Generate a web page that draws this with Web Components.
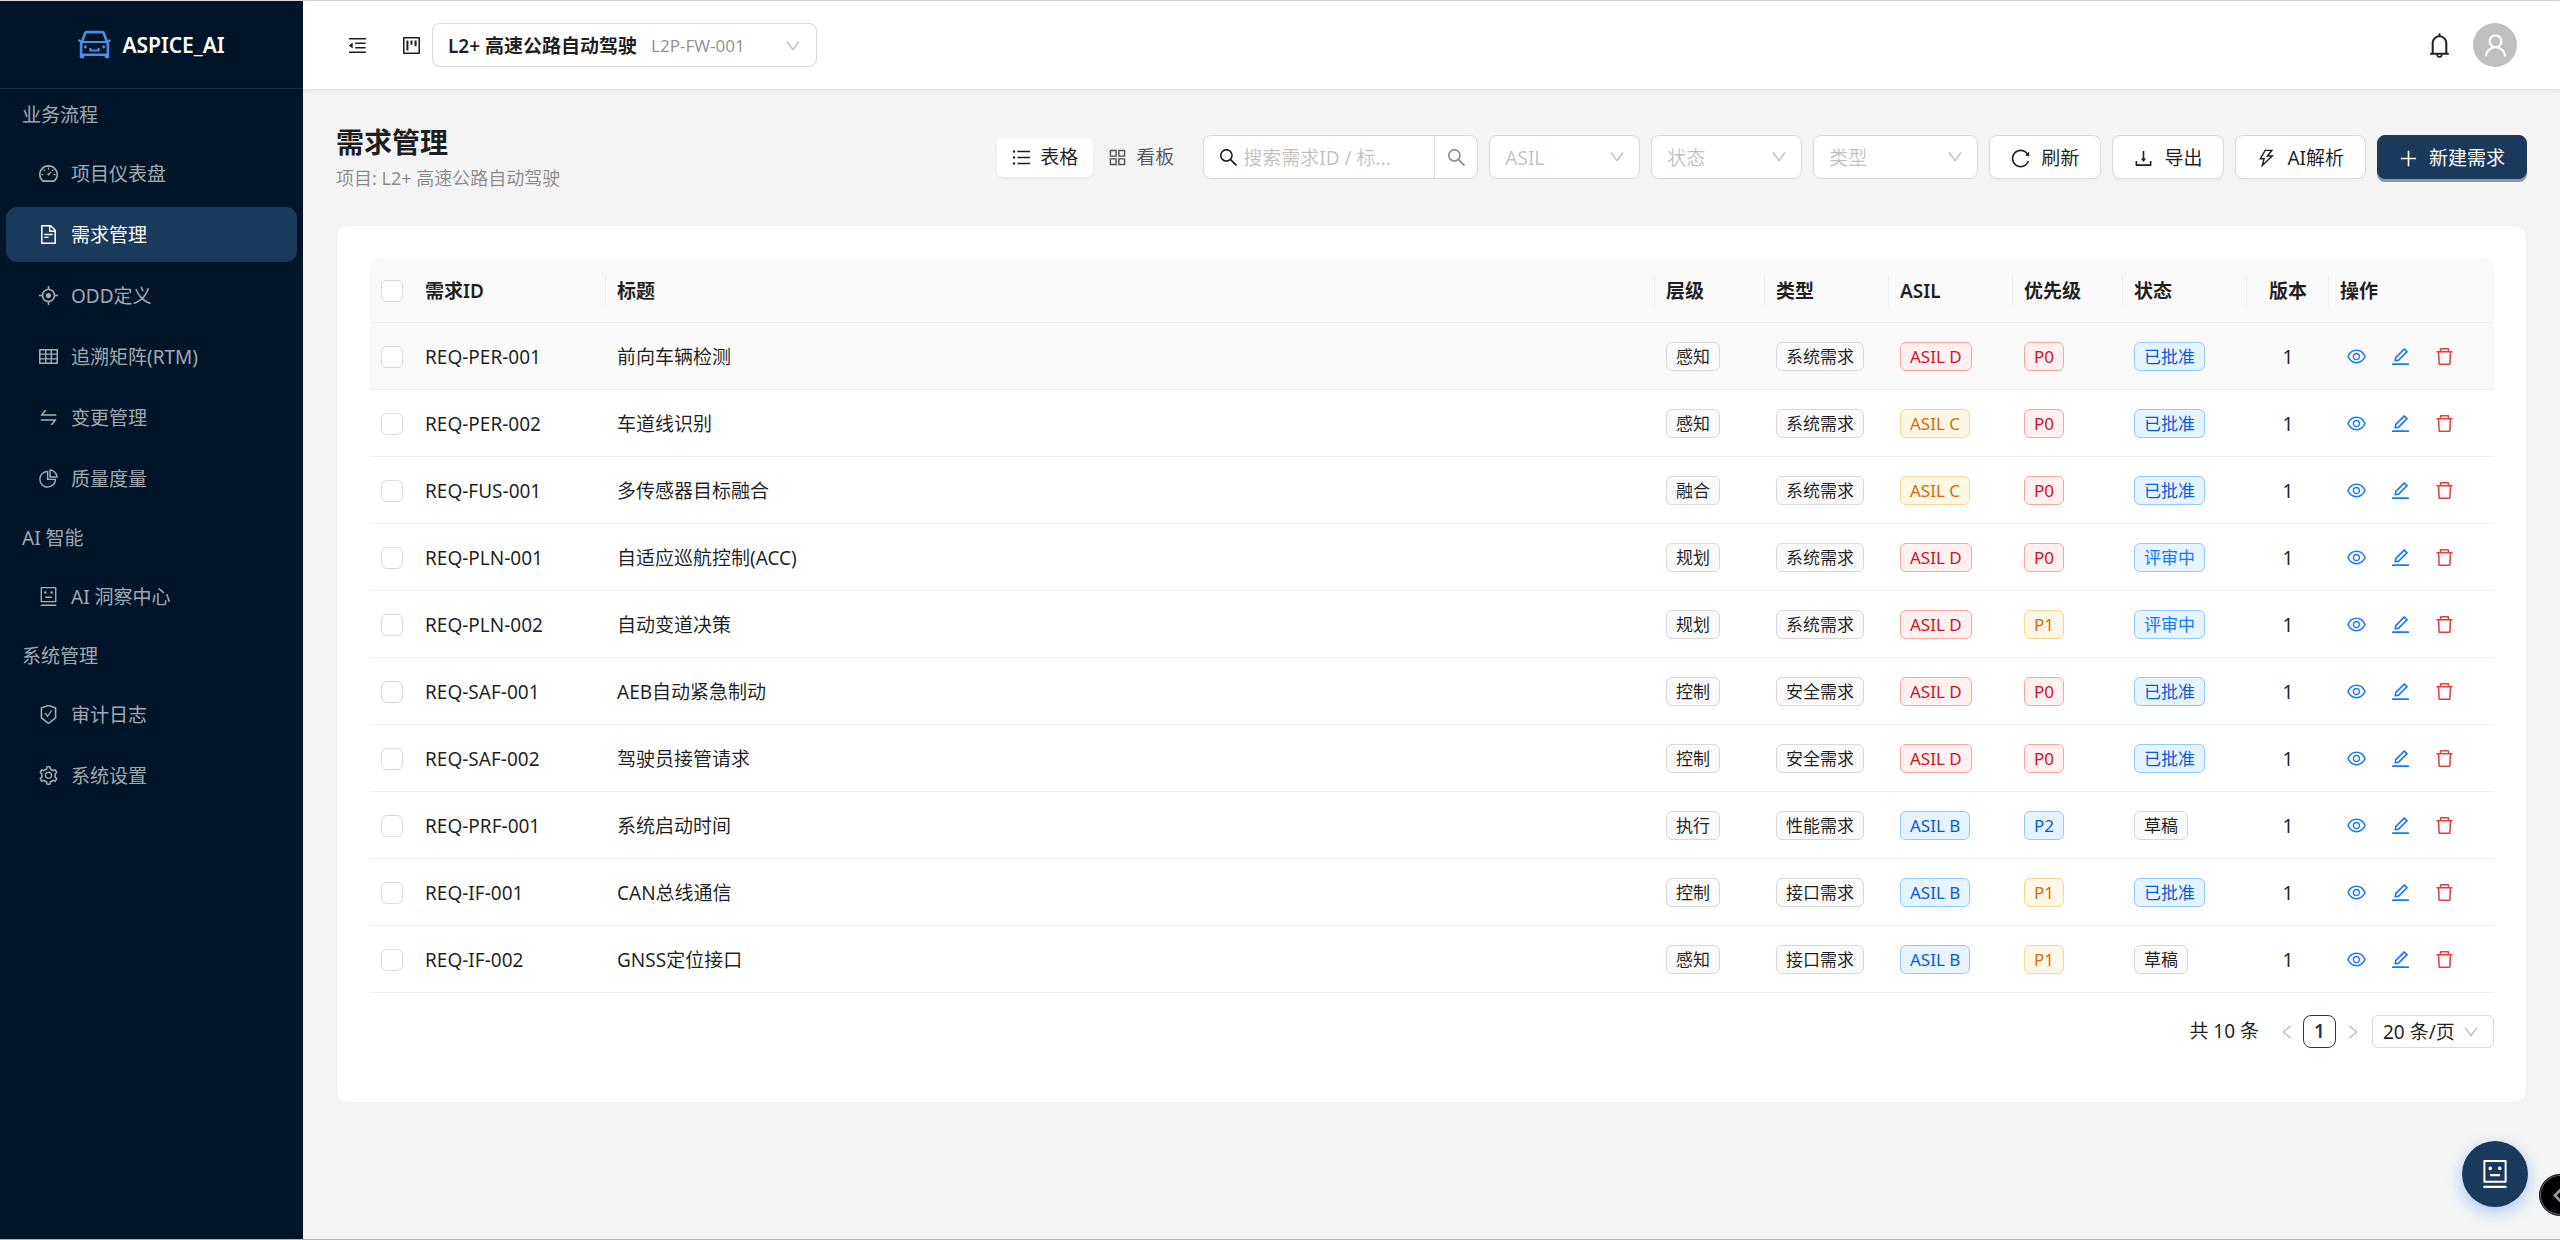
<!DOCTYPE html>
<html lang="zh-CN">
<head>
<meta charset="utf-8">
<meta name="viewport" content="width=device-width, initial-scale=1">
<title>需求管理 - ASPICE_AI</title>
<style>
  :root {
    --primary: #1a3a5c;
    --link: #1677ff;
    --danger: #e53e3e;
    --border: #d9d9d9;
    --split: #f0f0f0;
    --text: rgba(0, 0, 0, 0.88);
    --text-sub: rgba(0, 0, 0, 0.45);
    --text-hint: rgba(0, 0, 0, 0.25);
  }

  body {
    margin: 0;
    background: #f4f4f4;
    color: var(--text);
    font-family: "Noto Sans", "Noto Sans CJK SC", sans-serif;
    font-size: 19px;
    line-height: 30px;
  }
</style>
</head>
<body>
<app-shell>
  <side-nav slot="nav">
    <nav-group label="业务流程">
      <nav-item icon="dashboard">项目仪表盘</nav-item>
      <nav-item icon="file" active>需求管理</nav-item>
      <nav-item icon="aim">ODD定义</nav-item>
      <nav-item icon="table">追溯矩阵(RTM)</nav-item>
      <nav-item icon="swap">变更管理</nav-item>
      <nav-item icon="pie">质量度量</nav-item>
    </nav-group>
    <nav-group label="AI 智能">
      <nav-item icon="robot">AI 洞察中心</nav-item>
    </nav-group>
    <nav-group label="系统管理">
      <nav-item icon="safety">审计日志</nav-item>
      <nav-item icon="setting">系统设置</nav-item>
    </nav-group>
  </side-nav>

  <app-header slot="header"></app-header>

  <page-heading heading="需求管理" sub="项目: L2+ 高速公路自动驾驶">
    <view-switch></view-switch>
    <search-box></search-box>
    <filter-select label="ASIL" options="ASIL A,ASIL B,ASIL C,ASIL D"></filter-select>
    <filter-select label="状态" options="草稿,评审中,已批准"></filter-select>
    <filter-select label="类型" options="系统需求,安全需求,性能需求,接口需求" wide></filter-select>
    <ui-button icon="reload">刷新</ui-button>
    <ui-button icon="download">导出</ui-button>
    <ui-button icon="thunder">AI解析</ui-button>
    <ui-button icon="plus" primary>新建需求</ui-button>
  </page-heading>

  <data-card>
    <req-table></req-table>
    <page-nav slot="footer" total="10"></page-nav>
  </data-card>
</app-shell>
<float-tools></float-tools>

<script>
const ICONS = {
  car: 'M380 704h264c4.4 0 8-3.6 8-8v-84c0-4.4-3.6-8-8-8h-40c-4.4 0-8 3.6-8 8v36H428v-36c0-4.4-3.6-8-8-8h-40c-4.4 0-8 3.6-8 8v84c0 4.4 3.6 8 8 8zm340-123a40 40 0 1080 0 40 40 0 10-80 0zm239-167.6L935.3 372a8 8 0 00-10.9-2.9l-50.7 29.6-78.3-216.2a63.9 63.9 0 00-60.9-44.4H301.2c-34.7 0-65.5 22.4-76.2 55.5l-74.6 205.2-50.8-29.6a8 8 0 00-10.9 2.9L65 413.4c-2.2 3.8-.9 8.6 2.9 10.8l60.4 35.2-14.5 40c-1.2 3.2-1.8 6.6-1.8 10v348.2c0 15.7 11.8 28.4 26.3 28.4h67.6c12.3 0 23-9.3 25.6-22.3l7.7-37.7h545.6l7.7 37.7c2.7 13 13.3 22.3 25.6 22.3h67.6c14.5 0 26.3-12.7 26.3-28.4V509.4c0-3.4-.6-6.8-1.8-10l-14.5-40 60.3-35.2a8 8 0 003-10.8zM840 517v237H184V517l15.6-43h624.8l15.6 43zM292.7 218.1l.5-1.3.4-1.3c1.1-3.3 4.1-5.5 7.6-5.5h427.6l75.4 208H220l72.7-199.9zM224 581a40 40 0 1080 0 40 40 0 10-80 0z',
  fold: 'M408 442h480c4.4 0 8-3.6 8-8v-56c0-4.4-3.6-8-8-8H408c-4.4 0-8 3.6-8 8v56c0 4.4 3.6 8 8 8zm-8 204c0 4.4 3.6 8 8 8h480c4.4 0 8-3.6 8-8v-56c0-4.4-3.6-8-8-8H408c-4.4 0-8 3.6-8 8v56zm504-486H120c-4.4 0-8 3.6-8 8v56c0 4.4 3.6 8 8 8h784c4.4 0 8-3.6 8-8v-56c0-4.4-3.6-8-8-8zm0 632H120c-4.4 0-8 3.6-8 8v56c0 4.4 3.6 8 8 8h784c4.4 0 8-3.6 8-8v-56c0-4.4-3.6-8-8-8zM115.4 518.9L271.7 642c5.8 4.6 14.4.5 14.4-6.9V388.9c0-7.4-8.5-11.5-14.4-6.9L115.4 505.1a8.74 8.74 0 000 13.8z',
  project: 'M280 752h80c4.4 0 8-3.6 8-8V280c0-4.4-3.6-8-8-8h-80c-4.4 0-8 3.6-8 8v464c0 4.4 3.6 8 8 8zm192-280h80c4.4 0 8-3.6 8-8V280c0-4.4-3.6-8-8-8h-80c-4.4 0-8 3.6-8 8v184c0 4.4 3.6 8 8 8zm192 72h80c4.4 0 8-3.6 8-8V280c0-4.4-3.6-8-8-8h-80c-4.4 0-8 3.6-8 8v256c0 4.4 3.6 8 8 8zm216-432H144c-17.7 0-32 14.3-32 32v736c0 17.7 14.3 32 32 32h736c17.7 0 32-14.3 32-32V144c0-17.7-14.3-32-32-32zm-40 728H184V184h656v656z',
  down: 'M884 256h-75c-5.1 0-9.9 2.5-12.9 6.6L512 654.2 227.9 262.6c-3-4.1-7.8-6.6-12.9-6.6h-75c-6.5 0-10.3 7.4-6.5 12.7l352.6 486.1c12.8 17.6 39 17.6 51.7 0l352.6-486.1c3.9-5.3.1-12.7-6.4-12.7z',
  left: 'M724 218.3V141c0-6.7-7.7-10.4-12.9-6.3L260.3 486.8a31.86 31.86 0 000 50.3l450.8 352.1c5.3 4.1 12.9.4 12.9-6.3v-77.3c0-4.9-2.3-9.6-6.1-12.6l-360-281 360-281.1c3.8-3 6.1-7.7 6.1-12.6z',
  right: 'M765.7 486.8L314.9 134.7A7.97 7.97 0 00302 141v77.3c0 4.9 2.3 9.6 6.1 12.6l360 281.1-360 281.1c-3.9 3-6.1 7.7-6.1 12.6V883c0 6.7 7.7 10.4 12.9 6.3l450.8-352.1a31.96 31.96 0 000-50.4z',
  chevron: 'M560 120L168 512L560 904L660 804L368 512L660 220z',
  search: 'M909.6 854.5L649.9 594.8C690.2 542.7 712 479 712 412c0-80.2-31.3-155.4-87.9-212.1-56.6-56.7-132-87.9-212.1-87.9s-155.5 31.3-212.1 87.9C143.2 256.5 112 331.8 112 412c0 80.1 31.3 155.5 87.9 212.1C256.5 680.8 331.8 712 412 712c67 0 130.6-21.8 182.7-62l259.7 259.6a8.2 8.2 0 0011.6 0l43.6-43.5a8.2 8.2 0 000-11.6zM570.4 570.4C528 612.7 471.8 636 412 636s-116-23.3-158.4-65.6C211.3 528 188 471.8 188 412s23.3-116.1 65.6-158.4C296 211.3 352.2 188 412 188s116.1 23.2 158.4 65.6S636 352.2 636 412s-23.3 116.1-65.6 158.4z',
  file: 'M854.6 288.6L639.4 73.4c-6-6-14.1-9.4-22.6-9.4H192c-17.7 0-32 14.3-32 32v832c0 17.7 14.3 32 32 32h640c17.7 0 32-14.3 32-32V311.3c0-8.5-3.4-16.7-9.4-22.7zM790.2 326H602V137.8L790.2 326zm1.8 562H232V136h302v216a42 42 0 0042 42h216v494zM504 618H320c-4.4 0-8 3.6-8 8v48c0 4.4 3.6 8 8 8h184c4.4 0 8-3.6 8-8v-48c0-4.4-3.6-8-8-8zM312 490v48c0 4.4 3.6 8 8 8h384c4.4 0 8-3.6 8-8v-48c0-4.4-3.6-8-8-8H320c-4.4 0-8 3.6-8 8z',
  dashboard: 'M924.8 385.6a446.7 446.7 0 00-96-142.4 446.7 446.7 0 00-142.4-96C631.1 123.8 572.5 112 512 112s-119.1 11.8-174.4 35.2a446.7 446.7 0 00-142.4 96 446.7 446.7 0 00-96 142.4C75.8 440.9 64 499.5 64 560c0 132.7 58.3 257.7 159.9 343.1l1.7 1.4c5.8 4.8 13.1 7.5 20.6 7.5h531.7c7.5 0 14.8-2.7 20.6-7.5l1.7-1.4C901.7 817.7 960 692.7 960 560c0-60.5-11.9-119.1-35.2-174.4zM761.4 836H262.6A371.12 371.12 0 01140 560c0-99.4 38.7-192.8 109-263 70.3-70.3 163.7-109 263-109 99.4 0 192.8 38.7 263 109 70.3 70.3 109 163.7 109 263 0 105.6-44.5 205.5-122.6 276zM623.5 421.5a8.03 8.03 0 00-11.3 0L527.7 506c-18.7-5-39.4-.2-54.1 14.5a55.95 55.95 0 000 79.2 55.95 55.95 0 0079.2 0 55.87 55.87 0 0014.5-54.1l84.5-84.5c3.1-3.1 3.1-8.2 0-11.3l-28.3-28.3zM490 320h44c4.4 0 8-3.6 8-8v-80c0-4.4-3.6-8-8-8h-44c-4.4 0-8 3.6-8 8v80c0 4.4 3.6 8 8 8zm260 218v44c0 4.4 3.6 8 8 8h80c4.4 0 8-3.6 8-8v-44c0-4.4-3.6-8-8-8h-80c-4.4 0-8 3.6-8 8zm12.7-197.2l-31.1-31.1a8.03 8.03 0 00-11.3 0l-56.6 56.6a8.03 8.03 0 000 11.3l31.1 31.1c3.1 3.1 8.2 3.1 11.3 0l56.6-56.6c3.1-3.1 3.1-8.2 0-11.3zm-458.6-31.1a8.03 8.03 0 00-11.3 0l-31.1 31.1a8.03 8.03 0 000 11.3l56.6 56.6c3.1 3.1 8.2 3.1 11.3 0l31.1-31.1c3.1-3.1 3.1-8.2 0-11.3l-56.6-56.6zM262 530h-80c-4.4 0-8 3.6-8 8v44c0 4.4 3.6 8 8 8h80c4.4 0 8-3.6 8-8v-44c0-4.4-3.6-8-8-8z',
  aim: 'M952 474H829.8C812.5 327.6 696.4 211.5 550 194.2V72c0-4.4-3.6-8-8-8h-60c-4.4 0-8 3.6-8 8v122.2C327.6 211.5 211.5 327.6 194.2 474H72c-4.4 0-8 3.6-8 8v60c0 4.4 3.6 8 8 8h122.2C211.5 696.4 327.6 812.5 474 829.8V952c0 4.4 3.6 8 8 8h60c4.4 0 8-3.6 8-8V829.8C696.4 812.5 812.5 696.4 829.8 550H952c4.4 0 8-3.6 8-8v-60c0-4.4-3.6-8-8-8zM512 756c-134.8 0-244-109.2-244-244s109.2-244 244-244 244 109.2 244 244-109.2 244-244 244zM392 512a120 120 0 10240 0 120 120 0 10-240 0z',
  table: 'M928 160H96c-17.7 0-32 14.3-32 32v640c0 17.7 14.3 32 32 32h832c17.7 0 32-14.3 32-32V192c0-17.7-14.3-32-32-32zm-40 208H676V232h212v136zm0 224H676V432h212v160zM412 432h200v160H412V432zm200-64H412V232h200v136zm-476 64h212v160H136V432zm0-200h212v136H136V232zm0 424h212v136H136V656zm276 0h200v136H412V656zm476 136H676V656h212v136z',
  swap: 'M847.9 592H152c-4.4 0-8 3.6-8 8v60c0 4.4 3.6 8 8 8h605.2L612.9 851c-4.1 5.2-.4 13 6.3 13h72.5c4.9 0 9.5-2.2 12.6-6.1l168.8-214.1c16.5-21 1.6-51.8-25.2-51.8zM872 356H266.8l144.3-183c4.1-5.2.4-13-6.3-13h-72.5c-4.9 0-9.5 2.2-12.6 6.1L150.9 380.2c-16.5 21-1.6 51.8 25.1 51.8h696c4.4 0 8-3.6 8-8v-60c0-4.4-3.6-8-8-8z',
  pie: 'M864 518H506V160c0-4.4-3.6-8-8-8h-26a398.46 398.46 0 00-282.8 117.1 398.19 398.19 0 00-85.7 127.1A397.61 397.61 0 0072 552a398.46 398.46 0 00117.1 282.8c36.7 36.7 79.5 65.6 127.1 85.7A397.61 397.61 0 00472 952a398.46 398.46 0 00282.8-117.1c36.7-36.7 65.6-79.5 85.7-127.1A397.61 397.61 0 00872 552v-26c0-4.4-3.6-8-8-8zM705.7 787.8A331.59 331.59 0 01470.4 884c-88.1-.4-170.9-34.9-233.2-97.2C174.5 724.1 140 640.7 140 552c0-88.7 34.5-172.1 97.2-234.8 54.6-54.6 124.9-87.9 200.8-95.5V586h364.3c-7.7 76.3-41.3 147-96.6 201.8zM952 462.4l-2.6-28.2c-8.5-92.1-49.4-179-115.2-244.6A399.4 399.4 0 00589 74.6L560.7 72c-4.7-.4-8.7 3.2-8.7 7.9V464c0 4.4 3.6 8 8 8l384-1c4.7 0 8.4-4 8-8.6zm-332.2-58.2V147.6a332.24 332.24 0 01166.4 89.8c45.7 45.6 77 103.6 90 166.1l-256.4.7z',
  robot: 'M300 328a60 60 0 10120 0 60 60 0 10-120 0zM852 64H172c-17.7 0-32 14.3-32 32v660c0 17.7 14.3 32 32 32h680c17.7 0 32-14.3 32-32V96c0-17.7-14.3-32-32-32zm-32 660H204V128h616v596zM604 328a60 60 0 10120 0 60 60 0 10-120 0zm250.2 556H169.8c-16.5 0-29.8 14.3-29.8 32v36c0 4.4 3.3 8 7.4 8h729.1c4.1 0 7.4-3.6 7.4-8v-36c.1-17.7-13.2-32-29.7-32zM664 508H360c-4.4 0-8 3.6-8 8v60c0 4.4 3.6 8 8 8h304c4.4 0 8-3.6 8-8v-60c0-4.4-3.6-8-8-8z',
  safety: 'M866.9 169.9L527.1 54.1C523 52.7 517.5 52 512 52s-11 .7-15.1 2.1L157.1 169.9c-8.3 2.8-15.1 12.4-15.1 21.2v482.4c0 8.8 5.7 20.4 12.6 25.9L499.3 968c3.5 2.7 8 4.1 12.6 4.1s9.2-1.4 12.6-4.1l344.7-268.6c6.9-5.4 12.6-17 12.6-25.9V191.1c.2-8.8-6.6-18.3-14.9-21.2zM810 654.3L512 886.5 214 654.3V226.7l298-101.6 298 101.6v427.6zm-405.8-201c-3-4.1-7.8-6.6-13-6.6H336c-6.5 0-10.3 7.4-6.5 12.7l126.4 174a16.1 16.1 0 0026 0l212.6-292.7c3.8-5.3 0-12.7-6.5-12.7h-55.2c-5.1 0-10 2.5-13 6.6L468.9 542.4l-64.7-89.1z',
  setting: 'M924.8 625.7l-65.5-56c3.1-19 4.7-38.4 4.7-57.8s-1.6-38.8-4.7-57.8l65.5-56a32.03 32.03 0 009.3-35.2l-.9-2.6a443.74 443.74 0 00-79.7-137.9l-1.8-2.1a32.12 32.12 0 00-35.1-9.5l-81.3 28.9c-30-24.6-63.5-44-99.7-57.6l-15.7-85a32.05 32.05 0 00-25.8-25.7l-2.7-.5c-52.1-9.4-106.9-9.4-159 0l-2.7.5a32.05 32.05 0 00-25.8 25.7l-15.8 85.4a351.86 351.86 0 00-99 57.4l-81.9-29.1a32 32 0 00-35.1 9.5l-1.8 2.1a446.02 446.02 0 00-79.7 137.9l-.9 2.6c-4.5 12.5-.8 26.5 9.3 35.2l66.3 56.6c-3.1 18.8-4.6 38-4.6 57.1 0 19.2 1.5 38.4 4.6 57.1L99 625.5a32.03 32.03 0 00-9.3 35.2l.9 2.6c18.1 50.4 44.9 96.9 79.7 137.9l1.8 2.1a32.12 32.12 0 0035.1 9.5l81.9-29.1c29.8 24.5 63.1 43.9 99 57.4l15.8 85.4a32.05 32.05 0 0025.8 25.7l2.7.5a449.4 449.4 0 00159 0l2.7-.5a32.05 32.05 0 0025.8-25.7l15.7-85a350 350 0 0099.7-57.6l81.3 28.9a32 32 0 0035.1-9.5l1.8-2.1c34.8-41.1 61.6-87.5 79.7-137.9l.9-2.6c4.5-12.3.8-26.3-9.3-35zM788.3 465.9c2.5 15.1 3.8 30.6 3.8 46.1s-1.3 31-3.8 46.1l-6.6 40.1 74.7 63.9a370.03 370.03 0 01-42.6 73.6L721 702.8l-31.4 25.8c-23.9 19.6-50.5 35-79.3 45.8l-38.1 14.3-17.9 97a377.5 377.5 0 01-85 0l-17.9-97.2-37.8-14.5c-28.5-10.8-55-26.2-78.7-45.7l-31.4-25.9-93.4 33.2c-17-22.9-31.2-47.6-42.6-73.6l75.5-64.5-6.5-40c-2.4-14.9-3.7-30.3-3.7-45.5 0-15.3 1.2-30.6 3.7-45.5l6.5-40-75.5-64.5c11.3-26.1 25.6-50.7 42.6-73.6l93.4 33.2 31.4-25.9c23.7-19.5 50.2-34.9 78.7-45.7l37.9-14.3 17.9-97.2c28.1-3.2 56.8-3.2 85 0l17.9 97 38.1 14.3c28.7 10.8 55.4 26.2 79.3 45.8l31.4 25.8 92.8-32.9c17 22.9 31.2 47.6 42.6 73.6L781.8 426l6.5 39.9zM512 326c-97.2 0-176 78.8-176 176s78.8 176 176 176 176-78.8 176-176-78.8-176-176-176zm79.2 255.2A111.6 111.6 0 01512 614c-29.9 0-58-11.7-79.2-32.8A111.6 111.6 0 01400 502c0-29.9 11.7-58 32.8-79.2C454 401.6 482.1 390 512 390c29.9 0 58 11.6 79.2 32.8A111.6 111.6 0 01624 502c0 29.9-11.7 58-32.8 79.2z',
  eye: 'M942.2 486.2C847.4 286.5 704.1 186 512 186c-192.2 0-335.4 100.5-430.2 300.3a60.3 60.3 0 000 51.5C176.6 737.5 319.9 838 512 838c192.2 0 335.4-100.5 430.2-300.3 7.7-16.2 7.7-35 0-51.5zM512 766c-161.3 0-279.4-81.8-362.7-254C232.6 339.8 350.7 258 512 258c161.3 0 279.4 81.8 362.7 254C791.5 684.2 673.4 766 512 766zm-4-430c-97.2 0-176 78.8-176 176s78.8 176 176 176 176-78.8 176-176-78.8-176-176-176zm0 288c-61.9 0-112-50.1-112-112s50.1-112 112-112 112 50.1 112 112-50.1 112-112 112z',
  edit: 'M257.7 752c2 0 4-.2 6-.5L431.9 722c2-.4 3.9-1.3 5.3-2.8l423.9-423.9a9.96 9.96 0 000-14.1L694.9 114.9c-1.9-1.9-4.4-2.9-7.1-2.9s-5.2 1-7.1 2.9L256.8 538.8c-1.5 1.5-2.4 3.3-2.8 5.3l-29.5 168.2a33.5 33.5 0 009.4 29.8c6.6 6.4 14.9 9.9 23.8 9.9zm67.4-174.4L687.8 215l73.3 73.3-362.7 362.6-88.9 15.7 15.6-89zM880 836H144c-17.7 0-32 14.3-32 32v36c0 4.4 3.6 8 8 8h784c4.4 0 8-3.6 8-8v-36c0-17.7-14.3-32-32-32z',
  trash: 'M360 184h-8c4.4 0 8-3.6 8-8v8h304v-8c0 4.4 3.6 8 8 8h-8v72h72v-80c0-35.3-28.7-64-64-64H352c-35.3 0-64 28.7-64 64v80h72v-72zm504 72H160c-17.7 0-32 14.3-32 32v32c0 4.4 3.6 8 8 8h60.4l24.7 523c1.6 34.1 29.8 61 63.9 61h454c34.2 0 62.3-26.8 63.9-61l24.7-523H888c4.4 0 8-3.6 8-8v-32c0-17.7-14.3-32-32-32zM731.3 840H292.7l-24.2-512h487l-24.2 512z',
  bell: 'M816 768h-24V428c0-141.1-104.3-257.7-240-277.1V112c0-22.1-17.9-40-40-40s-40 17.9-40 40v38.9c-135.7 19.4-240 136-240 277.1v340h-24c-17.7 0-32 14.3-32 32v32c0 4.4 3.6 8 8 8h216c0 61.8 50.2 112 112 112s112-50.2 112-112h216c4.4 0 8-3.6 8-8v-32c0-17.7-14.3-32-32-32zM512 888c-26.5 0-48-21.5-48-48h96c0 26.5-21.5 48-48 48zM304 768V428c0-55.6 21.6-107.8 60.9-147.1S456.4 220 512 220c55.6 0 107.8 21.6 147.1 60.9S720 372.4 720 428v340H304z',
  user: 'M858.5 763.6a374 374 0 00-80.6-119.5 375.63 375.63 0 00-119.5-80.6c-.4-.2-.8-.3-1.2-.5C719.5 518 760 444.7 760 362c0-137-111-248-248-248S264 225 264 362c0 82.7 40.5 156 102.8 201.1-.4.2-.8.3-1.2.5-44.8 18.9-85 46-119.5 80.6a375.63 375.63 0 00-80.6 119.5A371.7 371.7 0 00136 901.8a8 8 0 008 8.2h60c4.4 0 7.9-3.5 8-7.8 2-77.2 33-149.5 87.8-204.3 56.7-56.7 132-87.9 212.2-87.9s155.5 31.2 212.2 87.9C779 752.7 810 825 812 902.2c.1 4.4 3.6 7.8 8 7.8h60a8 8 0 008-8.2c-1-47.8-10.9-94.3-29.5-138.2zM512 534c-45.9 0-89.1-17.9-121.6-50.4S340 407.9 340 362c0-45.9 17.9-89.1 50.4-121.6S466.1 190 512 190s89.1 17.9 121.6 50.4S684 316.1 684 362c0 45.9-17.9 89.1-50.4 121.6S557.9 534 512 534z',
  list: 'M912 192H328c-4.4 0-8 3.6-8 8v56c0 4.4 3.6 8 8 8h584c4.4 0 8-3.6 8-8v-56c0-4.4-3.6-8-8-8zm0 284H328c-4.4 0-8 3.6-8 8v56c0 4.4 3.6 8 8 8h584c4.4 0 8-3.6 8-8v-56c0-4.4-3.6-8-8-8zm0 284H328c-4.4 0-8 3.6-8 8v56c0 4.4 3.6 8 8 8h584c4.4 0 8-3.6 8-8v-56c0-4.4-3.6-8-8-8zM104 228a56 56 0 10112 0 56 56 0 10-112 0zm0 284a56 56 0 10112 0 56 56 0 10-112 0zm0 284a56 56 0 10112 0 56 56 0 10-112 0z',
  board: 'M464 144H160c-8.8 0-16 7.2-16 16v304c0 8.8 7.2 16 16 16h304c8.8 0 16-7.2 16-16V160c0-8.8-7.2-16-16-16zm-52 268H212V212h200v200zm452-268H560c-8.8 0-16 7.2-16 16v304c0 8.8 7.2 16 16 16h304c8.8 0 16-7.2 16-16V160c0-8.8-7.2-16-16-16zm-52 268H612V212h200v200zM464 544H160c-8.8 0-16 7.2-16 16v304c0 8.8 7.2 16 16 16h304c8.8 0 16-7.2 16-16V560c0-8.8-7.2-16-16-16zm-52 268H212V612h200v200zm452-268H560c-8.8 0-16 7.2-16 16v304c0 8.8 7.2 16 16 16h304c8.8 0 16-7.2 16-16V560c0-8.8-7.2-16-16-16zm-52 268H612V612h200v200z',
  reload: 'M909.1 209.3l-56.4 44.1C775.8 155.1 656.2 92 521.9 92 290 92 102.3 279.5 102 511.5 101.7 743.7 289.8 932 521.9 932c181.3 0 335.8-115 394.6-276.1 1.5-4.2-.7-8.9-4.9-10.3l-56.7-19.5a8 8 0 00-10.1 4.8c-1.8 5-3.8 10-5.9 14.9-17.3 41-42.1 77.8-73.7 109.4A344.77 344.77 0 01655.9 829c-42.3 17.9-87.4 27-133.8 27-46.5 0-91.5-9.1-133.8-27A341.5 341.5 0 01279 755.2a342.16 342.16 0 01-73.7-109.4c-17.9-42.4-27-87.4-27-133.9s9.1-91.5 27-133.9c17.3-41 42.1-77.8 73.7-109.4 31.6-31.6 68.4-56.4 109.3-73.8 42.3-17.9 87.4-27 133.8-27 46.5 0 91.5 9.1 133.8 27a341.5 341.5 0 01109.3 73.8c9.9 9.9 19.2 20.4 27.8 31.4l-60.2 47a8 8 0 003 14.1l175.6 43c5 1.2 9.9-2.6 9.9-7.7l.8-180.9c-.1-6.6-7.8-10.3-13-6.2z',
  download: 'M505.7 661a8 8 0 0012.6 0l112-141.7c4.1-5.2.4-12.9-6.3-12.9h-74.1V168c0-4.4-3.6-8-8-8h-60c-4.4 0-8 3.6-8 8v338.3H400c-6.7 0-10.4 7.7-6.3 12.9l112 141.8zM878 626h-60c-4.4 0-8 3.6-8 8v154H214V634c0-4.4-3.6-8-8-8h-60c-4.4 0-8 3.6-8 8v198c0 17.7 14.3 32 32 32h684c17.7 0 32-14.3 32-32V634c0-4.4-3.6-8-8-8z',
  thunder: 'M848 359.3H627.7L825.8 109c4.1-5.3.4-13-6.3-13H436c-2.8 0-5.5 1.5-6.9 4L170 547.5c-3.1 5.3.7 12 6.9 12h174.4l-89.4 357.6c-1.9 7.8 7.5 13.3 13.3 7.7L853.5 373c5.2-4.9 1.7-13.7-5.5-13.7zM378.2 732.5l60.3-241H281.1l189.6-327.4h224.6L487 427.4h211L378.2 732.5z',
  plus: 'M482 152h60q8 0 8 8v704q0 8-8 8h-60q-8 0-8-8V160q0-8 8-8zM160 474h704q8 0 8 8v60q0 8-8 8H160q-8 0-8-8v-60q0-8 8-8z'
};

class UiIcon extends HTMLElement {
  constructor() {
    super();
    this.attachShadow({ mode: 'open' });
  }

  connectedCallback() {
    this.shadowRoot.innerHTML = `
      <style>
        :host { display: inline-flex; flex: none; width: var(--icon-size, 19px); height: var(--icon-size, 19px); }
        svg { width: 100%; height: 100%; fill: currentColor; }
      </style>
      <svg viewBox="64 64 896 896" aria-hidden="true"><path d="${ICONS[this.getAttribute('name')]}"/></svg>
    `;
  }
}
customElements.define('ui-icon', UiIcon);

class AppShell extends HTMLElement {
  constructor() {
    super();
    this.attachShadow({ mode: 'open' });
    this.shadowRoot.innerHTML = `
      <style>
        :host {
          display: flex;
          box-sizing: border-box;
          min-height: 100vh;
          border-top: 1px solid #d9d9d9;
          border-bottom: 1px solid #b4b4b4;
        }
        .body { flex: 1; min-width: 0; display: flex; flex-direction: column; }
        main { padding: 33px; }
      </style>
      <slot name="nav"></slot>
      <div class="body">
        <slot name="header"></slot>
        <main><slot></slot></main>
      </div>
    `;
  }
}
customElements.define('app-shell', AppShell);

class SideNav extends HTMLElement {
  constructor() {
    super();
    this.attachShadow({ mode: 'open' });
    this.shadowRoot.innerHTML = `
      <style>
        :host { display: block; flex: none; width: 303px; background: #001529; color: rgba(255, 255, 255, 0.65); }
        .logo {
          display: flex;
          align-items: center;
          justify-content: center;
          gap: 11px;
          box-sizing: border-box;
          height: 88px;
          border-bottom: 1px solid rgba(255, 255, 255, 0.1);
          color: #fff;
          font-size: 21px;
          font-weight: 600;
        }
        .logo ui-icon { --icon-size: 33px; color: #4a90e2; }
        nav { display: flex; flex-direction: column; gap: 6px; }
      </style>
      <div class="logo"><ui-icon name="car"></ui-icon><span>ASPICE_AI</span></div>
      <nav><slot></slot></nav>
    `;
  }
}
customElements.define('side-nav', SideNav);

class NavGroup extends HTMLElement {
  constructor() {
    super();
    this.attachShadow({ mode: 'open' });
  }

  connectedCallback() {
    this.shadowRoot.innerHTML = `
      <style>
        :host { display: flex; flex-direction: column; gap: 6px; }
        .label { padding: 2px 22px 0; line-height: 49px; }
      </style>
      <div class="label">${this.getAttribute('label')}</div>
      <slot></slot>
    `;
  }
}
customElements.define('nav-group', NavGroup);

class NavItem extends HTMLElement {
  constructor() {
    super();
    this.attachShadow({ mode: 'open' });
  }

  connectedCallback() {
    this.shadowRoot.innerHTML = `
      <style>
        :host { display: block; padding: 0 6px; }
        a {
          display: flex;
          align-items: center;
          gap: 13px;
          height: 55px;
          padding: 0 33px;
          border-radius: 11px;
          color: inherit;
          text-decoration: none;
        }
        a:hover { color: #fff; }
        :host([active]) a { background: var(--primary); color: #fff; }
      </style>
      <a href="#"><ui-icon name="${this.getAttribute('icon')}"></ui-icon><slot></slot></a>
    `;
  }
}
customElements.define('nav-item', NavItem);

class AppHeader extends HTMLElement {
  constructor() {
    super();
    this.attachShadow({ mode: 'open' });
    this.shadowRoot.innerHTML = `
      <style>
        :host { display: block; background: #fff; box-shadow: 0 1px 6px rgba(0, 0, 0, 0.1); }
        header { display: flex; align-items: center; height: 88px; padding: 0 43px 0 45px; }
        button { display: inline-flex; padding: 0; border: 0; background: none; color: inherit; cursor: pointer; }
        .project { display: flex; align-items: center; gap: 11px; margin-left: 35px; }
        .picker {
          display: flex;
          align-items: center;
          gap: 13px;
          box-sizing: border-box;
          width: 385px;
          height: 44px;
          padding: 2px 15px 0;
          border: 1px solid var(--border);
          border-radius: 8px;
        }
        select {
          appearance: none;
          margin: 0;
          padding: 0;
          border: 0;
          background: none;
          color: inherit;
          font: inherit;
          font-weight: 600;
        }
        .code { color: var(--text-sub); font-size: 17px; }
        .picker ui-icon { --icon-size: 16px; margin-left: auto; color: var(--text-hint); }
        .right { display: flex; align-items: center; gap: 21px; margin-left: auto; }
        .bell { --icon-size: 25px; }
        .avatar {
          --icon-size: 25px;
          align-items: center;
          justify-content: center;
          width: 44px;
          height: 44px;
          border-radius: 50%;
          background: #bfbfbf;
          color: #fff;
        }
      </style>
      <header>
        <button aria-label="收起菜单"><ui-icon name="fold"></ui-icon></button>
        <div class="project">
          <ui-icon name="project"></ui-icon>
          <div class="picker">
            <select aria-label="当前项目"><option>L2+ 高速公路自动驾驶</option></select>
            <span class="code">L2P-FW-001</span>
            <ui-icon name="down"></ui-icon>
          </div>
        </div>
        <div class="right">
          <button class="bell" aria-label="通知"><ui-icon name="bell"></ui-icon></button>
          <button class="avatar" aria-label="用户"><ui-icon name="user"></ui-icon></button>
        </div>
      </header>
    `;
  }
}
customElements.define('app-header', AppHeader);

class PageHeading extends HTMLElement {
  constructor() {
    super();
    this.attachShadow({ mode: 'open' });
  }

  connectedCallback() {
    this.shadowRoot.innerHTML = `
      <style>
        :host { display: flex; align-items: center; justify-content: space-between; gap: 22px; margin-bottom: 33px; }
        h1 { margin: 0 0 2px; font-size: 28px; font-weight: 600; line-height: 40px; }
        p { margin: 0; color: var(--text-sub); font-size: 18px; line-height: 28px; }
        .tools { display: flex; align-items: center; gap: 11px; }
      </style>
      <div>
        <h1>${this.getAttribute('heading')}</h1>
        <p>${this.getAttribute('sub')}</p>
      </div>
      <div class="tools"><slot></slot></div>
    `;
  }
}
customElements.define('page-heading', PageHeading);

class ViewSwitch extends HTMLElement {
  constructor() {
    super();
    this.attachShadow({ mode: 'open' });
    this.shadowRoot.innerHTML = `
      <style>
        :host { display: flex; padding: 3px; border-radius: 8px; }
        input { position: absolute; opacity: 0; pointer-events: none; }
        label {
          display: flex;
          align-items: center;
          gap: 9px;
          height: 39px;
          padding: 0 15px;
          border-radius: 6px;
          color: rgba(0, 0, 0, 0.65);
          cursor: pointer;
        }
        input:checked + label { background: #fff; color: var(--text); box-shadow: 0 2px 4px rgba(0, 0, 0, 0.05); }
      </style>
      <input type="radio" name="view" id="table" checked>
      <label for="table"><ui-icon name="list"></ui-icon>表格</label>
      <input type="radio" name="view" id="board">
      <label for="board"><ui-icon name="board"></ui-icon>看板</label>
    `;
  }
}
customElements.define('view-switch', ViewSwitch);

class SearchBox extends HTMLElement {
  constructor() {
    super();
    this.attachShadow({ mode: 'open' });
    this.shadowRoot.innerHTML = `
      <style>
        :host {
          display: flex;
          box-sizing: border-box;
          width: 275px;
          height: 44px;
          border: 1px solid var(--border);
          border-radius: 8px;
          background: #fff;
          overflow: hidden;
        }
        label { flex: 1; min-width: 0; display: flex; align-items: center; gap: 5px; padding: 0 15px; }
        input {
          flex: 1;
          min-width: 0;
          padding: 2px 0 0;
          border: 0;
          outline: 0;
          background: none;
          color: inherit;
          font: inherit;
          text-overflow: ellipsis;
        }
        input::placeholder { color: var(--text-hint); }
        button {
          display: flex;
          align-items: center;
          justify-content: center;
          width: 43px;
          padding: 0;
          border: 0;
          border-left: 1px solid var(--border);
          background: none;
          color: var(--text-sub);
        }
      </style>
      <label><ui-icon name="search"></ui-icon><input type="text" placeholder="搜索需求ID / 标..." aria-label="搜索需求"></label>
      <button aria-label="搜索"><ui-icon name="search"></ui-icon></button>
    `;
  }
}
customElements.define('search-box', SearchBox);

class FilterSelect extends HTMLElement {
  constructor() {
    super();
    this.attachShadow({ mode: 'open' });
  }

  connectedCallback() {
    const label = this.getAttribute('label');
    const options = this.getAttribute('options').split(',');
    this.shadowRoot.innerHTML = `
      <style>
        :host { display: grid; align-items: center; width: 151px; }
        :host([wide]) { width: 165px; }
        select, ui-icon { grid-area: 1 / 1; }
        select {
          appearance: none;
          width: 100%;
          height: 44px;
          margin: 0;
          padding: 2px 36px 0 15px;
          border: 1px solid var(--border);
          border-radius: 8px;
          background: #fff;
          color: var(--text-hint);
          font: inherit;
        }
        option { color: var(--text); }
        ui-icon { --icon-size: 16px; justify-self: end; margin-right: 15px; color: var(--text-hint); pointer-events: none; }
      </style>
      <select aria-label="${label}">
        <option value="" selected>${label}</option>
        ${options.map(o => `<option>${o}</option>`).join('')}
      </select>
      <ui-icon name="down"></ui-icon>
    `;
  }
}
customElements.define('filter-select', FilterSelect);

class UiButton extends HTMLElement {
  constructor() {
    super();
    this.attachShadow({ mode: 'open' });
  }

  connectedCallback() {
    this.shadowRoot.innerHTML = `
      <style>
        :host { display: inline-flex; }
        button {
          display: inline-flex;
          align-items: center;
          gap: 11px;
          height: 44px;
          padding: 2px 21px 0;
          border: 1px solid var(--border);
          border-radius: 8px;
          background: #fff;
          box-shadow: 0 3px 0 rgba(0, 0, 0, 0.02);
          color: inherit;
          font: inherit;
          white-space: nowrap;
          cursor: pointer;
        }
        :host([primary]) button {
          border-color: var(--primary);
          background: var(--primary);
          box-shadow: 0 3px 0 #8f979f;
          color: #fff;
        }
      </style>
      <button><ui-icon name="${this.getAttribute('icon')}"></ui-icon><slot></slot></button>
    `;
  }
}
customElements.define('ui-button', UiButton);

class DataCard extends HTMLElement {
  constructor() {
    super();
    this.attachShadow({ mode: 'open' });
    this.shadowRoot.innerHTML = `
      <style>
        :host {
          display: block;
          padding: 32px 32px 54px 33px;
          border: 1px solid var(--split);
          border-radius: 11px;
          background: #fff;
        }
        .footer { margin-top: 22px; }
      </style>
      <slot></slot>
      <div class="footer"><slot name="footer"></slot></div>
    `;
  }
}
customElements.define('data-card', DataCard);

class UiTag extends HTMLElement {
  constructor() {
    super();
    this.attachShadow({ mode: 'open' });
    this.shadowRoot.innerHTML = `
      <style>
        :host {
          display: block;
          width: fit-content;
          padding: 0 9px;
          border: 1px solid #d9d9d9;
          border-radius: 6px;
          background: #fafafa;
          color: var(--text);
          font-size: 17px;
          line-height: 27px;
          white-space: nowrap;
        }
        :host([color="red"]) { border-color: #ffa39e; background: #fff1f0; color: #cf1322; }
        :host([color="orange"]) { border-color: #ffd591; background: #fff7e6; color: #d46b08; }
        :host([color="blue"]) { border-color: #91caff; background: #e6f4ff; color: #0958d9; }
        :host([color="processing"]) { border-color: #91caff; background: #e6f4ff; color: #1677ff; }
      </style>
      <slot></slot>
    `;
  }
}
customElements.define('ui-tag', UiTag);

const ROWS = [
  ['REQ-PER-001', '前向车辆检测', '感知', '系统需求', 'ASIL D', 'P0', '已批准'],
  ['REQ-PER-002', '车道线识别', '感知', '系统需求', 'ASIL C', 'P0', '已批准'],
  ['REQ-FUS-001', '多传感器目标融合', '融合', '系统需求', 'ASIL C', 'P0', '已批准'],
  ['REQ-PLN-001', '自适应巡航控制(ACC)', '规划', '系统需求', 'ASIL D', 'P0', '评审中'],
  ['REQ-PLN-002', '自动变道决策', '规划', '系统需求', 'ASIL D', 'P1', '评审中'],
  ['REQ-SAF-001', 'AEB自动紧急制动', '控制', '安全需求', 'ASIL D', 'P0', '已批准'],
  ['REQ-SAF-002', '驾驶员接管请求', '控制', '安全需求', 'ASIL D', 'P0', '已批准'],
  ['REQ-PRF-001', '系统启动时间', '执行', '性能需求', 'ASIL B', 'P2', '草稿'],
  ['REQ-IF-001', 'CAN总线通信', '控制', '接口需求', 'ASIL B', 'P1', '已批准'],
  ['REQ-IF-002', 'GNSS定位接口', '感知', '接口需求', 'ASIL B', 'P1', '草稿']
];

const COLORS = {
  'ASIL D': 'red', 'ASIL C': 'orange', 'ASIL B': 'blue',
  P0: 'red', P1: 'orange', P2: 'blue',
  '已批准': 'blue', '评审中': 'processing'
};

const tag = text => `<ui-tag color="${COLORS[text] || ''}">${text}</ui-tag>`;

class ReqTable extends HTMLElement {
  constructor() {
    super();
    this.attachShadow({ mode: 'open' });
    this.shadowRoot.innerHTML = `
      <style>
        :host { display: block; }
        table { width: 100%; table-layout: fixed; border-collapse: separate; border-spacing: 0; }
        th, td {
          box-sizing: border-box;
          padding: 1px 11px 0;
          border-bottom: 1px solid var(--split);
          text-align: left;
          white-space: nowrap;
        }
        th { height: 65px; padding-top: 2px; background: #fafafa; font-weight: 600; }
        th:first-child { border-top-left-radius: 11px; }
        th:last-child { border-top-right-radius: 11px; }
        td { height: 67px; }
        th.sep {
          background: linear-gradient(var(--split), var(--split)) right center / 1px 31px no-repeat #fafafa;
        }
        tbody tr:first-child td { background: #fafafa; }
        .center { text-align: center; }
        .w-check { width: 44px; }
        .w-id { width: 192px; }
        .w-sm { width: 110px; }
        .w-md { width: 124px; }
        .w-ver { width: 82px; }
        .w-ops { width: 165px; }
        input {
          appearance: none;
          display: block;
          box-sizing: border-box;
          width: 22px;
          height: 22px;
          margin: 0;
          border: 1px solid var(--border);
          border-radius: 6px;
          background: #fff;
        }
        .ops { display: flex; gap: 11px; }
        button {
          display: flex;
          align-items: center;
          justify-content: center;
          width: 33px;
          height: 33px;
          padding: 0;
          border: 0;
          background: none;
          color: var(--link);
          cursor: pointer;
        }
        button.danger { color: var(--danger); }
      </style>
      <table>
        <thead>
          <tr>
            <th class="w-check"><input type="checkbox" aria-label="全选"></th>
            <th class="w-id sep">需求ID</th>
            <th class="sep">标题</th>
            <th class="w-sm sep">层级</th>
            <th class="w-md sep">类型</th>
            <th class="w-md sep">ASIL</th>
            <th class="w-sm sep">优先级</th>
            <th class="w-md sep">状态</th>
            <th class="w-ver sep center">版本</th>
            <th class="w-ops">操作</th>
          </tr>
        </thead>
        <tbody>
          ${ROWS.map(([id, title, ...tags]) => `
            <tr>
              <td><input type="checkbox" aria-label="${id}"></td>
              <td>${id}</td>
              <td>${title}</td>
              ${tags.map(t => `<td>${tag(t)}</td>`).join('')}
              <td class="center">1</td>
              <td>
                <div class="ops">
                  <button aria-label="查看"><ui-icon name="eye"></ui-icon></button>
                  <button aria-label="编辑"><ui-icon name="edit"></ui-icon></button>
                  <button class="danger" aria-label="删除"><ui-icon name="trash"></ui-icon></button>
                </div>
              </td>
            </tr>`).join('')}
        </tbody>
      </table>
    `;
  }
}
customElements.define('req-table', ReqTable);

class PageNav extends HTMLElement {
  constructor() {
    super();
    this.attachShadow({ mode: 'open' });
  }

  connectedCallback() {
    this.shadowRoot.innerHTML = `
      <style>
        :host { display: flex; align-items: center; justify-content: flex-end; line-height: 33px; }
        button {
          display: flex;
          align-items: center;
          justify-content: center;
          box-sizing: border-box;
          width: 33px;
          height: 33px;
          padding: 0;
          border: 1px solid transparent;
          border-radius: 8px;
          background: none;
          font: inherit;
        }
        button ui-icon { --icon-size: 16px; color: var(--text-hint); }
        .total { margin-right: 11px; }
        .current { border-color: var(--primary); background: #fff; color: var(--primary); font-weight: 600; }
        .size { display: grid; align-items: center; width: 122px; margin-left: 3px; }
        select, .size ui-icon { grid-area: 1 / 1; }
        select {
          appearance: none;
          width: 100%;
          height: 33px;
          margin: 0;
          padding: 0 10px;
          border: 1px solid var(--border);
          border-radius: 6px;
          background: #fff;
          color: inherit;
          font: inherit;
        }
        .size ui-icon { --icon-size: 16px; justify-self: end; margin-right: 15px; color: var(--text-hint); pointer-events: none; }
      </style>
      <span class="total">共 ${this.getAttribute('total')} 条</span>
      <button aria-label="上一页" disabled><ui-icon name="left"></ui-icon></button>
      <button class="current">1</button>
      <button aria-label="下一页" disabled><ui-icon name="right"></ui-icon></button>
      <div class="size">
        <select aria-label="每页条数"><option>20 条/页</option><option>50 条/页</option></select>
        <ui-icon name="down"></ui-icon>
      </div>
    `;
  }
}
customElements.define('page-nav', PageNav);

class FloatTools extends HTMLElement {
  constructor() {
    super();
    this.attachShadow({ mode: 'open' });
    this.shadowRoot.innerHTML = `
      <style>
        :host { display: block; }
        button {
          position: fixed;
          display: flex;
          align-items: center;
          justify-content: center;
          padding: 0;
          border-radius: 50%;
          color: #fff;
          cursor: pointer;
        }
        .ai {
          --icon-size: 28px;
          right: 32px;
          bottom: 33px;
          width: 66px;
          height: 66px;
          border: 0;
          background: var(--primary);
          box-shadow: 0 5px 16px rgba(22, 119, 255, 0.35);
        }
        .edge {
          --icon-size: 17px;
          justify-content: flex-start;
          right: -21px;
          bottom: 24px;
          width: 42px;
          height: 42px;
          padding-left: 11px;
          border: 1px solid #1c1c1c;
          background: #000;
          box-shadow: inset 0 0 0 1px #4f6f7c;
          color: #999;
        }
      </style>
      <button class="ai" aria-label="AI 助手"><ui-icon name="robot"></ui-icon></button>
      <button class="edge" aria-label="展开"><ui-icon name="chevron"></ui-icon></button>
    `;
  }
}
customElements.define('float-tools', FloatTools);
</script>
</body>
</html>
